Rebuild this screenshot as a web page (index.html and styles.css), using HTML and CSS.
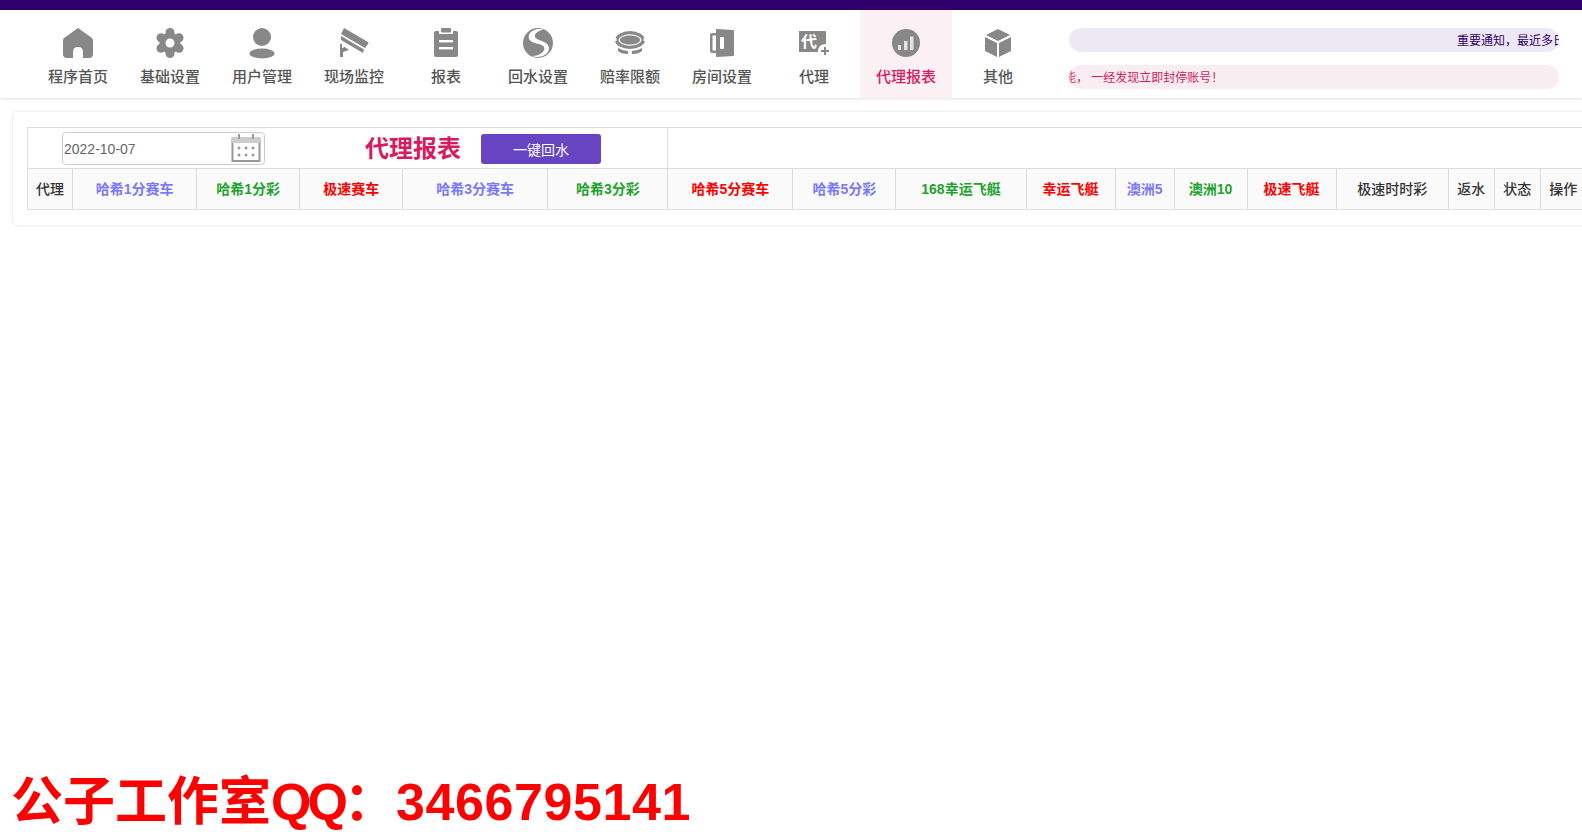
FILE: index.html
```html
<!DOCTYPE html>
<html lang="zh-CN">
<head>
    <meta charset="UTF-8">
    <meta name="viewport" content="width=device-width, initial-scale=1.0">
    <title>代理报表</title>
    <link rel="stylesheet" href="styles.css">
</head>
<body>
    <div class="top-bar"></div>

    <header class="nav-bar">
        <ul class="nav-list">
            <li class="nav-item">
                <svg class="nav-icon" viewBox="0 0 32 32"><path d="M16 1 L30 11 Q31 12 31 14 V27 Q31 31 27 31 H21 V25 Q21 20 16 20 Q11 20 11 25 V31 H5 Q1 31 1 27 V14 Q1 12 2 11 Z"/></svg>
                <span>程序首页</span>
            </li>
            <li class="nav-item">
                <svg class="nav-icon" viewBox="0 0 32 32"><circle cx="16" cy="16" r="10.5"/><circle cx="16" cy="5.5" r="4.5"/><circle cx="25" cy="10.8" r="4.5"/><circle cx="25" cy="21.2" r="4.5"/><circle cx="16" cy="26.5" r="4.5"/><circle cx="7" cy="21.2" r="4.5"/><circle cx="7" cy="10.8" r="4.5"/><circle class="cut" cx="16" cy="16" r="4.5"/></svg>
                <span>基础设置</span>
            </li>
            <li class="nav-item">
                <svg class="nav-icon" viewBox="0 0 32 32"><circle cx="16" cy="10" r="9"/><ellipse cx="16" cy="26.5" rx="12.5" ry="5"/></svg>
                <span>用户管理</span>
            </li>
            <li class="nav-item">
                <svg class="nav-icon" viewBox="0 0 32 32"><path d="M6 1 L30 15 Q31 16 30 17 L27 21 L3 7 Z"/><path d="M3 9 L26 22.5 L25 26 L3 13 Z"/><path d="M2 17 H4 V21 L7 20 L11 23 L5 25 V30 H2 Z"/></svg>
                <span>现场监控</span>
            </li>
            <li class="nav-item">
                <svg class="nav-icon" viewBox="0 0 32 32"><rect x="4" y="4" width="24" height="26" rx="2"/><rect class="cut" x="9" y="2" width="14" height="5"/><rect x="11" y="1" width="10" height="4.5" rx="1"/><rect class="cut" x="9" y="13" width="14" height="2.4"/><rect class="cut" x="9" y="20" width="14" height="2.4"/></svg>
                <span>报表</span>
            </li>
            <li class="nav-item">
                <svg class="nav-icon" viewBox="0 0 32 32"><circle cx="16" cy="16" r="15"/><path class="cut" d="M22 2 C12 1 5 6 7 12 C9 17 20 16 22 20 C24 24 18 29 10 29 C18 32 27 28 27 21 C27 14 15 14 13 10 C12 6 17 4 22 2 Z"/></svg>
                <span>回水设置</span>
            </li>
            <li class="nav-item">
                <svg class="nav-icon" viewBox="0 0 32 32"><ellipse cx="16" cy="13" rx="15" ry="9"/><rect class="cut" x="0" y="11" width="2.5" height="3"/><rect class="cut" x="29.5" y="11" width="2.5" height="3"/><rect class="cut" x="7" y="3" width="1.5" height="3"/><rect class="cut" x="23.5" y="3" width="1.5" height="3"/><ellipse class="cut" cx="16" cy="13" rx="11.5" ry="5.8"/><ellipse cx="16" cy="13" rx="10.2" ry="4.6"/><path d="M4 21 Q9 24 14 24 V27 Q7 27 4 24 Z"/><path d="M28 21 Q23 24 18 24 V27 Q25 27 28 24 Z"/></svg>
                <span>赔率限额</span>
            </li>
            <li class="nav-item">
                <svg class="nav-icon" viewBox="0 0 32 32"><path d="M10 6 H6 Q4 6 4 8 V24 Q4 26 6 26 H10 V23.5 H6.5 V8.5 H10 Z"/><path d="M10 3 Q10 2 11 2 L27 3 Q28 3 28 4 V28 Q28 29 27 29 L11 30 Q10 30 10 29 Z"/><rect class="cut" x="14" y="10" width="4" height="12" rx="1"/></svg>
                <span>房间设置</span>
            </li>
            <li class="nav-item">
                <svg class="nav-icon" viewBox="0 0 32 32"><path d="M1 4 H27 Q28 4 28 5 V17 Q20 17 20 25 H1 Z"/><text class="badge-text" x="3" y="20">代</text><path d="M26 20 H28 V23 H31 V25 H28 V28 H26 V25 H23 V23 H26 Z"/></svg>
                <span>代理</span>
            </li>
            <li class="nav-item active">
                <svg class="nav-icon" viewBox="0 0 32 32"><circle cx="16" cy="16" r="14"/><rect class="bar" x="8" y="18" width="3" height="5"/><rect class="bar" x="14" y="14" width="3.5" height="9"/><rect class="bar" x="20" y="9.5" width="3.5" height="13.5"/></svg>
                <span>代理报表</span>
            </li>
            <li class="nav-item">
                <svg class="nav-icon" viewBox="0 0 32 32"><path d="M16 2 L28 8 L16 14 L4 8 Z"/><path d="M3 10 L15 16 V30 L3 24 Z"/><path d="M29 10 L17 16 V30 L29 24 Z"/></svg>
                <span>其他</span>
            </li>
        </ul>

        <div class="notices">
            <div class="notice notice-purple"><span class="notice-text">重要通知，最近多日</span></div>
            <div class="notice notice-pink"><span class="notice-text">能， 一经发现立即封停账号！</span></div>
        </div>
    </header>

    <main class="card">
        <table class="report">
            <colgroup>
                <col class="w-45"><col class="w-124"><col class="w-103"><col class="w-103"><col class="w-145"><col class="w-120"><col class="w-125"><col class="w-103"><col class="w-130"><col class="w-89"><col class="w-59"><col class="w-73"><col class="w-89"><col class="w-112"><col class="w-46"><col class="w-46"><col class="w-46">
            </colgroup>
            <tr class="tool-row">
                <td colspan="6">
                    <div class="tools">
                        <div class="date-box">
                            <span class="date-text">2022-10-07</span>
                            <svg class="date-icon" viewBox="0 0 32 30"><path class="date-line" d="M2.5 6 H29.5 V28 H2.5 Z"/><path class="date-fill" d="M2 4 H30 V10 H2 Z"/><path class="date-line" d="M9 1 V6 M23 1 V6"/><g class="date-dots"><circle cx="9" cy="15" r="1.5"/><circle cx="16" cy="15" r="1.5"/><circle cx="23" cy="15" r="1.5"/><circle cx="9" cy="22" r="1.5"/><circle cx="16" cy="22" r="1.5"/><circle cx="23" cy="22" r="1.5"/></g></svg>
                        </div>
                        <h2 class="report-title">代理报表</h2>
                        <button class="btn-rebate" type="button">一键回水</button>
                    </div>
                </td>
                <td colspan="11"></td>
            </tr>
            <tr class="head-row">
                <th>代理</th>
                <th class="blue">哈希1分赛车</th>
                <th class="green">哈希1分彩</th>
                <th class="red">极速赛车</th>
                <th class="blue">哈希3分赛车</th>
                <th class="green">哈希3分彩</th>
                <th class="red">哈希5分赛车</th>
                <th class="blue">哈希5分彩</th>
                <th class="green">168幸运飞艇</th>
                <th class="red">幸运飞艇</th>
                <th class="blue">澳洲5</th>
                <th class="green">澳洲10</th>
                <th class="red">极速飞艇</th>
                <th>极速时时彩</th>
                <th>返水</th>
                <th>状态</th>
                <th>操作</th>
            </tr>
        </table>
    </main>

    <footer class="studio">公子工作室<span class="studio-qq">QQ</span>：<span class="studio-num">3466795141</span></footer>
</body>
</html>
```

FILE: styles.css
```css
html {
    overflow-x: hidden;
}

body {
    font-family: 'Liberation Sans', 'Noto Sans CJK SC', sans-serif;
    margin: 0;
    padding: 0;
    background-color: #fff;
    color: #333;
    min-height: 832px;
    display: flex;
    flex-direction: column;
}

.top-bar {
    height: 10px;
    background-color: #2f006b;
}

/* nav */
.nav-bar {
    display: flex;
    height: 88px;
    padding-left: 32px;
    box-shadow: 0 1px 3px rgba(0, 0, 0, 0.12);
}

.nav-list {
    list-style-type: none;
    margin: 0;
    padding: 0;
    display: flex;
}

.nav-item {
    width: 92px;
    display: flex;
    flex-direction: column;
    align-items: center;
    padding-top: 17px;
    box-sizing: border-box;
    font-size: 15px;
    font-weight: 500;
    line-height: 20px;
    color: #555;
}

.nav-item span {
    margin-top: 8px;
}

.nav-item.active {
    background-color: #fbf0f4;
    color: #d81b60;
}

.nav-icon {
    width: 32px;
    height: 32px;
    fill: #888;
}

.nav-icon .cut {
    fill: #fff;
}

.nav-icon .bar {
    fill: #e4e4e4;
}

.badge-text {
    fill: #fff;
    font-size: 16px;
    font-weight: 700;
}

/* scrolling notices */
.notices {
    margin-left: 25px;
    width: 490px;
    padding-top: 18px;
    display: flex;
    flex-direction: column;
    gap: 13px;
}

.notice {
    height: 24px;
    border-radius: 12px;
    overflow: hidden;
    font-size: 12px;
    line-height: 26px;
    white-space: nowrap;
}

.notice-purple {
    background-color: #ede8f3;
    color: #2f006b;
    padding-left: 388px;
}

.notice-pink {
    background-color: #f8eef2;
    color: #d81b60;
}

.notice-pink .notice-text {
    margin-left: -5px;
}

/* report table */
.card {
    margin: 13px 0 0 12px;
    padding: 15px 14px;
    width: 1620px;
    box-sizing: border-box;
    border: 1px solid #f0f0f0;
    border-radius: 5px;
    box-shadow: 0 0 3px rgba(0, 0, 0, 0.06);
}

.report {
    border-collapse: collapse;
    table-layout: fixed;
    width: 1560px;
}

.report td,
.report th {
    border: 1px solid #ddd;
    padding: 0;
}

.tool-row {
    height: 41px;
}

.head-row {
    height: 41px;
    background-color: #fafafa;
}

.report .head-row th {
    padding-bottom: 2px;
    font-size: 14px;
    font-weight: 500;
    color: #333;
}

.report .head-row .blue,
.report .head-row .green,
.report .head-row .red {
    font-weight: 700;
}

.report .head-row .blue {
    color: #7a78ff;
}

.report .head-row .green {
    color: #1fa32f;
}

.report .head-row .red {
    color: #ff0000;
}

.w-45 { width: 45px; }
.w-46 { width: 46px; }
.w-59 { width: 59px; }
.w-73 { width: 73px; }
.w-89 { width: 89px; }
.w-103 { width: 103px; }
.w-112 { width: 112px; }
.w-120 { width: 120px; }
.w-124 { width: 124px; }
.w-125 { width: 125px; }
.w-130 { width: 130px; }
.w-145 { width: 145px; }

.tools {
    display: flex;
    align-items: center;
    padding-left: 34px;
}

.date-box {
    width: 203px;
    height: 33px;
    box-sizing: border-box;
    border: 1px solid #ccc;
    border-radius: 4px;
    display: flex;
    align-items: center;
    justify-content: space-between;
    padding: 0 2px 0 1px;
    font-size: 14px;
    color: #666;
}

.date-text {
    padding-top: 2px;
}

.date-icon {
    width: 32px;
    height: 30px;
}

.date-line {
    fill: #fff;
    stroke: #999;
    stroke-width: 2;
}

.date-fill {
    fill: #ccc;
}

.date-dots {
    fill: #999;
}

.report-title {
    margin: 0 0 3px 100px;
    width: 96px;
    font-size: 24px;
    font-weight: 700;
    white-space: nowrap;
    color: #d81b60;
}

.btn-rebate {
    margin: 2px 0 0 20px;
    width: 120px;
    height: 30px;
    border: none;
    border-radius: 3px;
    background-color: #6644c2;
    color: #fff;
    font-family: inherit;
    font-size: 14px;
}

/* watermark line */
.studio {
    margin-top: auto;
    padding: 0 0 0 11px;
    font-size: 52px;
    font-weight: 700;
    line-height: 60px;
    color: #ff0000;
    white-space: nowrap;
}

.studio-qq {
    letter-spacing: -4px;
}

.studio-num {
    letter-spacing: 0.6px;
}
```
